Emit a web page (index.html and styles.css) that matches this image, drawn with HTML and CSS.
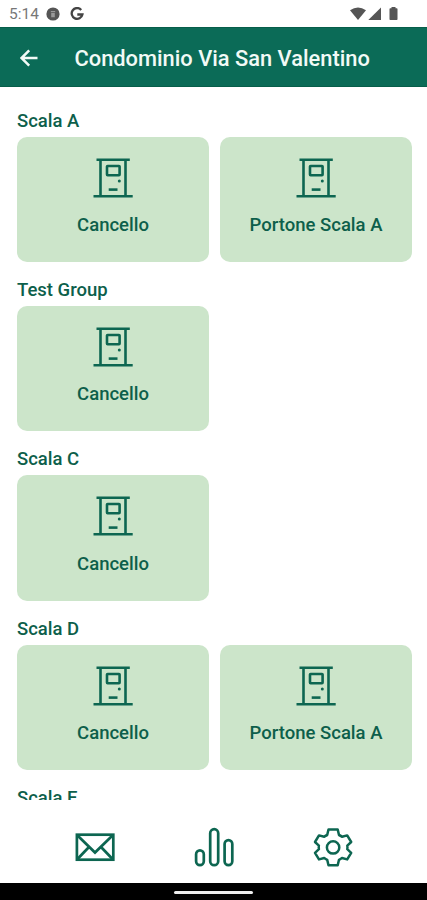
FILE: index.html
```html
<!DOCTYPE html>
<html lang="it">
<head>
<meta charset="utf-8">
<title>Condominio Via San Valentino</title>
<link rel="stylesheet" href="styles.css">
</head>
<body>
<svg class="defs" aria-hidden="true">
  <symbol id="door" viewBox="0 0 40 40">
    <g fill="none" stroke="currentColor" stroke-width="2.6">
      <path d="M3.500 1.800H36.800M.5 38.300H39.700M7.500 2V38M32.500 2V38"/>
      <rect x="14" y="8" width="12.600" height="9.200" rx=".6"/>
      <path d="M15.700 31.600H24.500"/>
    </g>
    <circle cx="26.300" cy="23.100" r="1.500" fill="currentColor"/>
  </symbol>
</svg>
<div class="phone">
  <div class="status">
    <span class="time">5:14</span>
    <svg class="info" viewBox="0 0 14 14"><circle cx="7" cy="7" r="6.6" fill="#555"/><path d="M4.800 4h4.400v1.200H4.800zM5.200 6h3.600v4.300H5.200z" fill="#999"/></svg>
    <svg class="google" viewBox="0 0 14 14"><path d="M11.200 2.900A5.400 5.400 0 1 0 12.400 7.500H7.300" fill="none" stroke="#444" stroke-width="2.300"/></svg>
    <svg class="signals" viewBox="0 0 50 14"><g fill="#555"><path d="M0 3.200Q8 -2.400 16 3.200L8 13Z"/><path d="M31 .5V13H18.300Z"/><path d="M41.500 0h4v1.300h1.200q.8 0 .8.8V12.200q0 .8-.8.8h-6.400q-.8 0-.8-.8V2.100q0-.8.8-.8h1.200z"/></g></svg>
  </div>
  <header class="bar">
    <svg class="back" viewBox="0 0 18 18"><path d="M17.500 9H1.800M9.200 1.300L1.500 9l7.700 7.700" fill="none" stroke="#f2faf6" stroke-width="2.500"/></svg>
    <h1>Condominio Via San Valentino</h1>
  </header>
  <main class="list">
    <section><h2>Scala A</h2>
      <div class="cards">
        <div class="card"><svg><use href="#door"/></svg><span>Cancello</span></div>
        <div class="card"><svg><use href="#door"/></svg><span>Portone Scala A</span></div>
      </div>
    </section>
    <section><h2>Test Group</h2>
      <div class="cards">
        <div class="card"><svg><use href="#door"/></svg><span>Cancello</span></div>
      </div>
    </section>
    <section><h2>Scala C</h2>
      <div class="cards">
        <div class="card"><svg><use href="#door"/></svg><span>Cancello</span></div>
      </div>
    </section>
    <section><h2>Scala D</h2>
      <div class="cards">
        <div class="card"><svg><use href="#door"/></svg><span>Cancello</span></div>
        <div class="card"><svg><use href="#door"/></svg><span>Portone Scala A</span></div>
      </div>
    </section>
    <section><h2>Scala E</h2></section>
  </main>
  <nav class="tabs">
    <svg viewBox="0 0 40 40"><g fill="none" stroke="currentColor" stroke-width="2.700"><rect x="1.900" y="7.700" width="36.400" height="25"/><path d="M2.500 8.500L20 25.500L37.500 8.500M2.500 32L14 20M37.500 32L26 20"/></g></svg>
    <svg viewBox="0 0 40 40"><g fill="none" stroke="currentColor" stroke-width="2.700"><rect x="2.100" y="23.300" width="7.700" height="14.900" rx="3.850"/><rect x="16.200" y="2.200" width="8" height="36" rx="4"/><rect x="30.600" y="13.200" width="7.700" height="25" rx="3.850"/></g></svg>
    <svg viewBox="0 0 40 40"><g fill="none" stroke="currentColor" stroke-width="2.500" stroke-linejoin="round"><path d="M15.500 2.500H24.700L26 8Q27.500 8.700 29 9.800L34.200 8.400L38.200 15L34.300 18.600Q34.700 20.400 34.300 22.200L38.200 25.800L34.200 32.400L29 31Q27.500 32.100 26 32.800L24.700 38.300H15.500L14.200 32.800Q12.700 32.100 11.200 31L6 32.400L2 25.800L5.900 22.200Q5.500 20.400 5.900 18.600L2 15L6 8.400L11.200 9.800Q12.700 8.700 14.200 8Z"/><circle cx="20.100" cy="20.400" r="6.200"/></g></svg>
  </nav>
  <footer class="system"><i></i></footer>
</div>
</body>
</html>
```
FILE: styles.css
```css
* { box-sizing: border-box; }
body { margin: 0; font-family: Roboto, "Liberation Sans", sans-serif; background: #fff; }
svg { display: block; }
.defs { position: absolute; width: 0; height: 0; }
.phone { width: 427px; height: 900px; display: flex; flex-direction: column; overflow: hidden; }
.status { height: 27px; flex: none; display: flex; align-items: center; padding: 1px 0 0 9px; }
.time { width: 30px; font-size: 15.500px; line-height: 18px; color: #777; }
.info { width: 14px; height: 14px; margin-left: 7px; }
.google { width: 14px; height: 14px; margin-left: 10px; }
.signals { width: 50px; height: 14px; margin-left: 266px; }
.bar { height: 60px; flex: none; display: flex; align-items: center; padding: 1px 0 0 20px; background: #0b6b57; border-top: 1px solid #075e4a; border-bottom: 1px solid #075e4a; }
.back { width: 18px; height: 18px; }
.bar h1 { margin: 3px 0 0 36.500px; font-size: 21.850px; line-height: 28px; font-weight: 500; color: #f2faf6; white-space: nowrap; }
.list { height: 713px; flex: none; overflow: hidden; padding: 21.700px 15px 0 17px; color: #0d5f4b; }
section { height: 169.300px; }
h2 { margin: 0; height: 28px; line-height: 24px; font-size: 18.500px; font-weight: 500; }
.cards { display: grid; grid-template-columns: 192px 192px; gap: 11px; }
.card { height: 125.500px; border-radius: 10px; background: #cce5ca; display: flex; flex-direction: column; align-items: center; padding-top: 21px; color: #0d6651; }
.card svg { width: 40px; height: 40px; }
.card span { margin-top: 15.500px; line-height: 24px; font-size: 18.500px; font-weight: 500; color: #0d5f4b; }
.tabs { height: 83px; flex: none; display: flex; gap: 79px; padding: 27px 0 0 75px; color: #0d6651; }
.tabs svg { width: 40px; height: 40px; }
.system { height: 17px; background: #000; display: flex; justify-content: center; padding-top: 8px; }
.system i { width: 79px; height: 3px; border-radius: 2px; background: #eee; }
```
